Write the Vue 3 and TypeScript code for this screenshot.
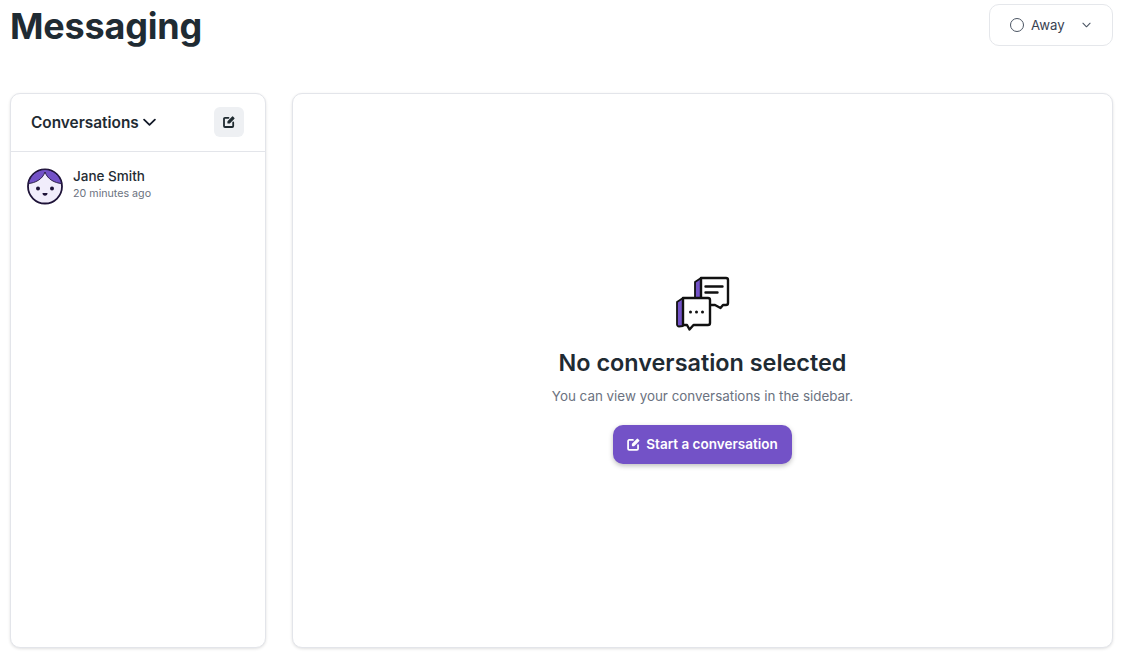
<script setup lang="ts">
const conversations = [{ name: 'Jane Smith', time: '20 minutes ago' }]
</script>

<template>
  <div class="page">
    <header class="top">
      <h1>Messaging</h1>
      <button class="status">
        <span class="dot" />
        <span class="status-label">Away</span>
        <svg class="status-caret" width="9" height="6" viewBox="0 0 10 6" fill="none">
          <path d="M1 1l4 4 4-4" stroke="#4b5563" stroke-width="1.2" stroke-linecap="round" stroke-linejoin="round" />
        </svg>
      </button>
    </header>

    <main class="body">
      <aside class="card sidebar">
        <div class="side-head">
          <div class="side-title">
            <span>Conversations</span>
            <svg width="13" height="9" viewBox="0 0 14 9" fill="none">
              <path d="M1.2 1.4L7 7l5.8-5.6" stroke="#111827" stroke-width="1.9" stroke-linecap="round" stroke-linejoin="round" />
            </svg>
          </div>
          <button class="compose">
            <svg width="12" height="12" viewBox="0 0 12 12" fill="none">
              <path d="M5.5 1.8H2a1 1 0 0 0-1 1V10a1 1 0 0 0 1 1h7.2a1 1 0 0 0 1-1V6.5" stroke="#1f2a30" stroke-width="1.8" stroke-linecap="round" />
              <path d="M9.6 1l1.4 1.4L6.4 7H5V5.6z" fill="#1f2a30" stroke="#1f2a30" stroke-width="1.2" stroke-linejoin="round" />
            </svg>
          </button>
        </div>
        <div v-for="c in conversations" :key="c.name" class="conv">
          <svg class="avatar" width="36" height="37" viewBox="0 0 36 36">
            <circle cx="18" cy="18" r="17" fill="#f1edfb" stroke="#1e1338" stroke-width="1.8" />
            <path d="M1.5 15C3 7 10 1.2 18 1c8 .2 15 6 16.500 14C28 14.500 20.500 11 18 3.500 15.500 11 8 14.500 1.500 15z" fill="#7352c7" stroke="#1e1338" stroke-width=".9" stroke-linejoin="round" />
            <circle cx="11" cy="20" r="2" fill="#1e1338" />
            <circle cx="25" cy="20" r="2" fill="#1e1338" />
            <path d="M15.500 24.500h5c0 1.800-1 2.800-2.500 2.800s-2.500-1-2.500-2.800z" fill="#1e1338" />
          </svg>
          <div class="conv-text">
            <div class="conv-name">{{ c.name }}</div>
            <div class="conv-time">{{ c.time }}</div>
          </div>
        </div>
      </aside>

      <section class="card content">
        <svg class="bubbles" width="56" height="56" viewBox="-1 -1 56 56" fill="none">
          <path d="M19 6l6-4v27h-6z" fill="#7352c7" stroke="#111" stroke-width="1.800" stroke-linejoin="round" />
          <path d="M25 2h25a2 2 0 0 1 2 2v23a2 2 0 0 1-2 2h-3l-2.500 3L39 29H25z" fill="#fff" stroke="#111" stroke-width="2.400" stroke-linejoin="round" />
          <path d="M29.500 10.500h17M29.500 16.500h12" stroke="#111" stroke-width="2.400" stroke-linecap="round" />
          <path d="M1 26l6-4v28l-4 .5a2 2 0 0 1-2-2z" fill="#7352c7" stroke="#111" stroke-width="1.800" stroke-linejoin="round" />
          <path d="M7 22h25a2 2 0 0 1 2 2v23a2 2 0 0 1-2 2H17.500l-4 4.500L11 49H7z" fill="#fff" stroke="#111" stroke-width="2.400" stroke-linejoin="round" />
          <circle cx="14.500" cy="36" r="1.500" fill="#111" />
          <circle cx="20.500" cy="36" r="1.500" fill="#111" />
          <circle cx="26.500" cy="36" r="1.500" fill="#111" />
        </svg>
        <h2>No conversation selected</h2>
        <p>You can view your conversations in the sidebar.</p>
        <button class="start">
          <svg width="13" height="13" viewBox="0 0 12 12" fill="none">
            <path d="M5.500 1.800H2a1 1 0 0 0-1 1V10a1 1 0 0 0 1 1h7.200a1 1 0 0 0 1-1V6.500" stroke="#fff" stroke-width="1.600" stroke-linecap="round" />
            <path d="M9.600 1l1.400 1.400L6.400 7H5V5.600z" fill="#fff" stroke="#fff" stroke-width="1" stroke-linejoin="round" />
          </svg>
          Start a conversation
        </button>
      </section>
    </main>
  </div>
</template>

<style>
html,
body {
  margin: 0;
  background: #fff;
}
</style>

<style scoped>
.page {
  height: 657px;
  box-sizing: border-box;
  padding: 0 12px 9px 10px;
  display: flex;
  flex-direction: column;
  font-family: Inter, 'Liberation Sans', sans-serif;
  color: #1f2b33;
  overflow: hidden;
}

.top {
  display: flex;
  justify-content: space-between;
  align-items: flex-start;
  height: 93px;
  flex: none;
}

h1 {
  margin: 4px 0 0;
  font-size: 36px;
  line-height: 44px;
  font-weight: 700;
  letter-spacing: -0.2px;
}

.status {
  margin-top: 4px;
  width: 124px;
  height: 42px;
  box-sizing: border-box;
  padding: 0 21px 0 20px;
  display: flex;
  align-items: center;
  background: #fff;
  border: 1px solid #e5e7eb;
  border-radius: 10px;
  font: inherit;
  font-size: 13.2px;
  color: #374151;
}

.dot {
  width: 14px;
  height: 14px;
  box-sizing: border-box;
  border: 1.5px solid #4b5563;
  border-radius: 50%;
  margin-right: 7px;
}

.status-caret {
  margin-left: auto;
}

.body {
  flex: 1;
  min-height: 0;
  display: flex;
  gap: 26px;
}

.card {
  box-sizing: border-box;
  background: #fff;
  border: 1px solid #e3e5ea;
  border-radius: 10px;
  box-shadow: 0 1px 3px rgba(0, 0, 0, 0.12);
}

.sidebar {
  width: 256px;
  flex: none;
}

.side-head {
  height: 58px;
  box-sizing: border-box;
  padding: 0 21px 0 20px;
  display: flex;
  align-items: center;
  justify-content: space-between;
  border-bottom: 1px solid #e3e5ea;
}

.side-title {
  display: flex;
  align-items: center;
  gap: 4px;
  font-size: 15.4px;
  font-weight: 600;
}

.compose {
  width: 30px;
  height: 30px;
  padding: 0;
  margin-bottom: 2px;
  border: 0;
  border-radius: 6px;
  background: #eef0f3;
  display: flex;
  align-items: center;
  justify-content: center;
}

.conv {
  display: flex;
  align-items: flex-start;
  gap: 10px;
  padding: 16px 16px 0;
}

.conv-name {
  font-size: 13.5px;
  font-weight: 500;
  line-height: 17px;
}

.conv-time {
  margin-top: 1px;
  font-size: 10.7px;
  line-height: 16px;
  color: #6b7280;
}

.content {
  flex: 1;
  display: flex;
  flex-direction: column;
  align-items: center;
  padding-top: 181px;
}

h2 {
  margin: 16px 0 0;
  font-size: 23.4px;
  line-height: 32px;
  font-weight: 600;
}

p {
  margin: 6px 0 0;
  font-size: 13.4px;
  line-height: 22px;
  color: #6b7280;
}

.start {
  margin-top: 18px;
  height: 39px;
  box-sizing: border-box;
  padding: 0 14px 1px;
  display: flex;
  align-items: center;
  gap: 6px;
  border: 0;
  border-radius: 10px;
  background: #7352c7;
  color: #fff;
  font: inherit;
  font-size: 13.5px;
  font-weight: 600;
  box-shadow: 0 2px 5px rgba(0, 0, 0, 0.25);
}
</style>
